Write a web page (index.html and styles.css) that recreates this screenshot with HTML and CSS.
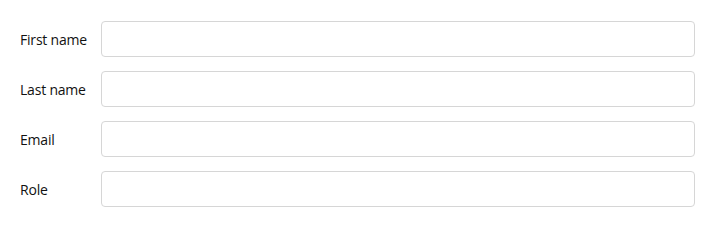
FILE: index.html
```html
<!DOCTYPE html>
<html lang="en">
<head>
    <meta charset="UTF-8">
    <title>Person form</title>
    <link rel="stylesheet" href="styles.css">
</head>
<body>
    <form class="person-form">
        <div class="form-row">
            <label for="firstName">First name</label>
            <input type="text" id="firstName">
        </div>
        <div class="form-row">
            <label for="lastName">Last name</label>
            <input type="text" id="lastName">
        </div>
        <div class="form-row">
            <label for="email">Email</label>
            <input type="email" id="email">
        </div>
        <div class="form-row">
            <label for="role">Role</label>
            <input type="text" id="role">
        </div>
    </form>
</body>
</html>
```
FILE: styles.css
```css
* {
    margin: 0;
    padding: 0;
    box-sizing: border-box;
}

body {
    font-family: "Open Sans", "Noto Sans", sans-serif;
    font-size: 14px;
    letter-spacing: -0.2px;
    color: #111;
    background: #fff;
}

.person-form {
    display: flex;
    flex-direction: column;
    gap: 14px;
    padding: 21px 21px 0 20px;
}

.form-row {
    display: flex;
    align-items: center;
}

.form-row label {
    width: 81px;
    flex-shrink: 0;
}

.form-row input {
    flex: 1;
    height: 36px;
    border: 1px solid #d6d6d6;
    border-radius: 4px;
    background: #fff;
    font: inherit;
    padding: 0 8px;
}
```
